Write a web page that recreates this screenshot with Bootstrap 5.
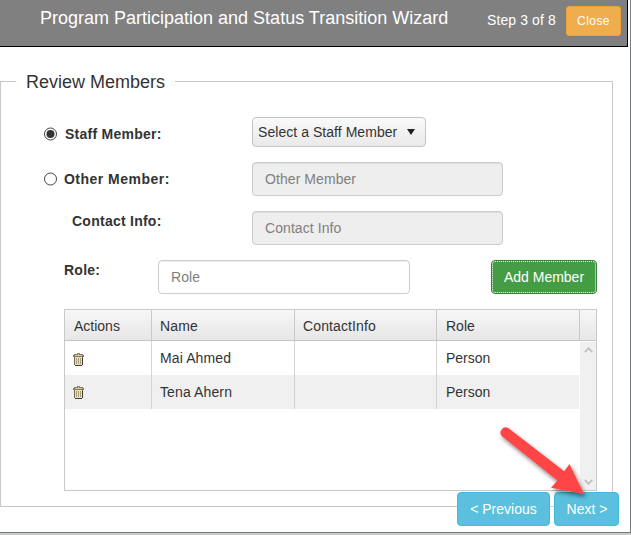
<!DOCTYPE html>
<html lang="en">
<head>
<meta charset="utf-8">
<title>Program Participation and Status Transition Wizard</title>
<link href="https://cdn.jsdelivr.net/npm/bootstrap@5.3.0/dist/css/bootstrap.min.css" rel="stylesheet">
<style>
body{font:14px/20px "Liberation Sans",Arial,sans-serif;color:#333;background:#c8cac9;height:535px;overflow:hidden}
.wizard{width:631px;height:533px;border-right:1px solid #777b7b;border-bottom:1px solid #777b7b}
.wizard-head{width:628px;height:47px;background:#808080;border-right:1px solid #000;border-bottom:1px solid #000;color:#fff;padding:6px 6px 0 40px}
.wizard-title{font-size:18px;line-height:24px;width:447px}
.step{width:79px;line-height:29px;letter-spacing:.1px}
.btn{--bs-btn-font-size:14px;--bs-btn-line-height:20px;--bs-btn-padding-y:6px;--bs-btn-padding-x:12px;--bs-btn-border-radius:4px;--bs-btn-color:#fff;white-space:nowrap}
.btn-close-wizard{--bs-btn-font-size:12px;--bs-btn-line-height:18px;--bs-btn-padding-y:5px;--bs-btn-padding-x:10px;--bs-btn-border-radius:3px;--bs-btn-bg:#f0ad4e;--bs-btn-border-color:#eea236;width:55px;height:30px;letter-spacing:.45px}
.btn-add{--bs-btn-bg:#449d44;--bs-btn-border-color:#398439;width:106px;height:34px;outline:1px dotted #fff;outline-offset:-2px;padding-left:0;padding-right:0}
.btn-step{--bs-btn-bg:#5bc0de;--bs-btn-border-color:#46b8da;height:34px;padding-left:0;padding-right:0}
.btn-prev{width:93px}
.btn-next{width:65px;padding-left:1px}
.members{width:613px;height:426px;margin-top:34px;border:1px solid #c8c8c8;padding-left:63px}
.members-title{font-size:18px;line-height:24px;width:159px;padding-left:10px;margin:-12px 0 23px -48px;background:#fff}
.radio-cell{width:20px;margin-left:-20px;padding-top:10px}
.radio-cell svg{width:14px;height:14px}
.lbl{font-weight:700;letter-spacing:.25px}
.lbl-radio{padding-top:7px}
.lbl-staff{padding-left:1px}
.lbl-other{letter-spacing:.48px}
.lbl-role{width:94px}
.form-control{font-size:14px;line-height:20px;height:34px;padding:6px 12px;border:1px solid #ccc;border-radius:4px;box-shadow:inset 0 1px 1px rgba(0,0,0,.075);letter-spacing:.07px}
.form-control::placeholder{color:#808080}
.form-control:disabled{background:#eee}
.wide{width:251px;margin-right:94px}
.role-input{width:252px}
.picker{width:174px;height:30px;border:1px solid #c5c5c5;border-radius:4px;background:linear-gradient(#fafafa,#e9e9e9);padding:0 10px 0 5px;margin-right:171px;letter-spacing:.05px}
.line{width:533px;margin-bottom:15px}
.line-staff{height:30px}
.grid-box{width:533px;height:182px;border:1px solid #c9c9c9}
.grid-head{height:31px;background:linear-gradient(#f7f7f7,#e8e6e7);border-bottom:1px solid #c5c5c5}
.grid-head>div{padding-top:6px}
.grid-body{height:149px}
.grid-row{height:34px;width:514px}
.grid-row>div{padding-top:7px}
.grid-row.alt{background:#f0f0f0}
.c1{width:87px;padding-left:8px}.c2{width:143px;padding-left:8px}.c3{width:142px;padding-left:8px}.c4{width:143px;padding-left:9px}
.c1,.c2,.c3,.grid-head .c4{border-right:1px solid #c9c9c9}
.grid-row .c1,.grid-row .c2,.grid-row .c3{border-right-color:#d4d4d4}
.grid-row .c4{width:142px}
.c2,.c3,.c1{letter-spacing:.12px}
.grid-head .c1{padding-left:9px;letter-spacing:0}
.scroll{width:16px;background:#f0f0f0;margin-top:1px;padding:5px 0}
.foot{width:162px;margin:-15px 0 0 457px}
.arrow{position:absolute;left:490px;top:418px;pointer-events:none}
</style>
</head>
<body>
<main class="wizard bg-white position-relative">
  <header class="wizard-head d-flex align-items-start">
    <div class="wizard-title">Program Participation and Status Transition Wizard</div>
    <div class="step">Step 3 of 8</div>
    <button class="btn btn-close-wizard">Close</button>
  </header>
  <section class="members">
    <div class="members-title">Review Members</div>
    <div class="line line-staff d-flex">
      <div class="radio-cell"><svg class="d-block"><circle cx="6.500" cy="7" r="6" fill="#fff" stroke="#444"/><circle cx="6.500" cy="7" r="4" fill="#333"/></svg></div>
      <div class="lbl lbl-radio lbl-staff flex-grow-1">Staff Member:</div>
      <div class="picker d-flex align-items-center justify-content-between"><span>Select a Staff Member</span><svg width="8" height="6"><path d="M0 0h8L4 6z" fill="#222"/></svg></div>
    </div>
    <div class="line d-flex">
      <div class="radio-cell"><svg class="d-block"><circle cx="6.500" cy="7" r="6" fill="#fff" stroke="#444"/></svg></div>
      <div class="lbl lbl-radio lbl-other flex-grow-1">Other Member:</div>
      <input class="form-control wide" placeholder="Other Member" disabled>
    </div>
    <div class="line d-flex">
      <div class="lbl ps-2 flex-grow-1">Contact Info:</div>
      <input class="form-control wide" placeholder="Contact Info" disabled>
    </div>
    <div class="line d-flex">
      <div class="lbl lbl-role">Role:</div>
      <input class="form-control role-input" placeholder="Role">
      <button class="btn btn-add ms-auto">Add Member</button>
    </div>
    <div class="grid-box">
      <div class="grid-head d-flex">
        <div class="c1">Actions</div><div class="c2">Name</div><div class="c3">ContactInfo</div><div class="c4">Role</div>
      </div>
      <div class="grid-body d-flex justify-content-between">
        <div>
          <div class="grid-row d-flex"><div class="c1"><svg class="d-block" width="12" height="20"><use href="#bin" y="5"/></svg></div><div class="c2">Mai Ahmed</div><div class="c3"></div><div class="c4">Person</div></div>
          <div class="grid-row alt d-flex"><div class="c1"><svg class="d-block" width="12" height="20"><use href="#bin" y="4"/></svg></div><div class="c2">Tena Ahern</div><div class="c3"></div><div class="c4">Person</div></div>
        </div>
        <div class="scroll d-flex flex-column justify-content-between align-items-center">
          <svg width="9" height="6"><path d="M.8 5.2L4.500 1.200l3.700 4" fill="none" stroke="#bfbfbf" stroke-width="1.800"/></svg>
          <svg width="9" height="6"><path d="M.8.8L4.500 4.800l3.700-4" fill="none" stroke="#bfbfbf" stroke-width="1.800"/></svg>
        </div>
      </div>
    </div>
  </section>
  <footer class="foot d-flex justify-content-between position-relative">
    <button class="btn btn-step btn-prev">&lt; Previous</button>
    <button class="btn btn-step btn-next">Next &gt;</button>
  </footer>
  <svg class="arrow" width="110" height="95">
    <defs>
      <filter id="shade" x="-20%" y="-20%" width="150%" height="150%"><feDropShadow dx="2" dy="3" stdDeviation="2" flood-color="#000" flood-opacity=".5"/></filter>
      <symbol id="bin" width="11" height="13" viewBox="0 0 11 13" shape-rendering="crispEdges">
        <path d="M4 0h3v1H4z" fill="#8d8768"/>
        <path d="M1 1h9v1h1v2H0V2h1z" fill="#857d5c"/>
        <path d="M2 2h7v1H2zM5 1h1v1H5z" fill="#cfc6a2"/>
        <path d="M1 4h9v8H9v1H2v-1H1z" fill="#6f694f"/>
        <path d="M2 4h7v8H2z" fill="#e6dfc4"/>
        <path d="M3 5h1v6H3zM5 5h1v6H5zM7 5h1v6H7z" fill="#aca17b"/>
        <path d="M9 5h1v7H9zM2 12h7v1H2z" fill="#3c3b36"/>
      </symbol>
    </defs>
    <path d="M18.200 10L74.200 53.200L79.500 46L94 76L61 69.700L67.300 62.500L12 18.200A5.200 5.200 0 0 1 18.200 10z" fill="#ff4545" filter="url(#shade)"/>
  </svg>
</main>
<script src="https://cdn.jsdelivr.net/npm/bootstrap@5.3.0/dist/js/bootstrap.bundle.min.js"></script>
</body>
</html>
